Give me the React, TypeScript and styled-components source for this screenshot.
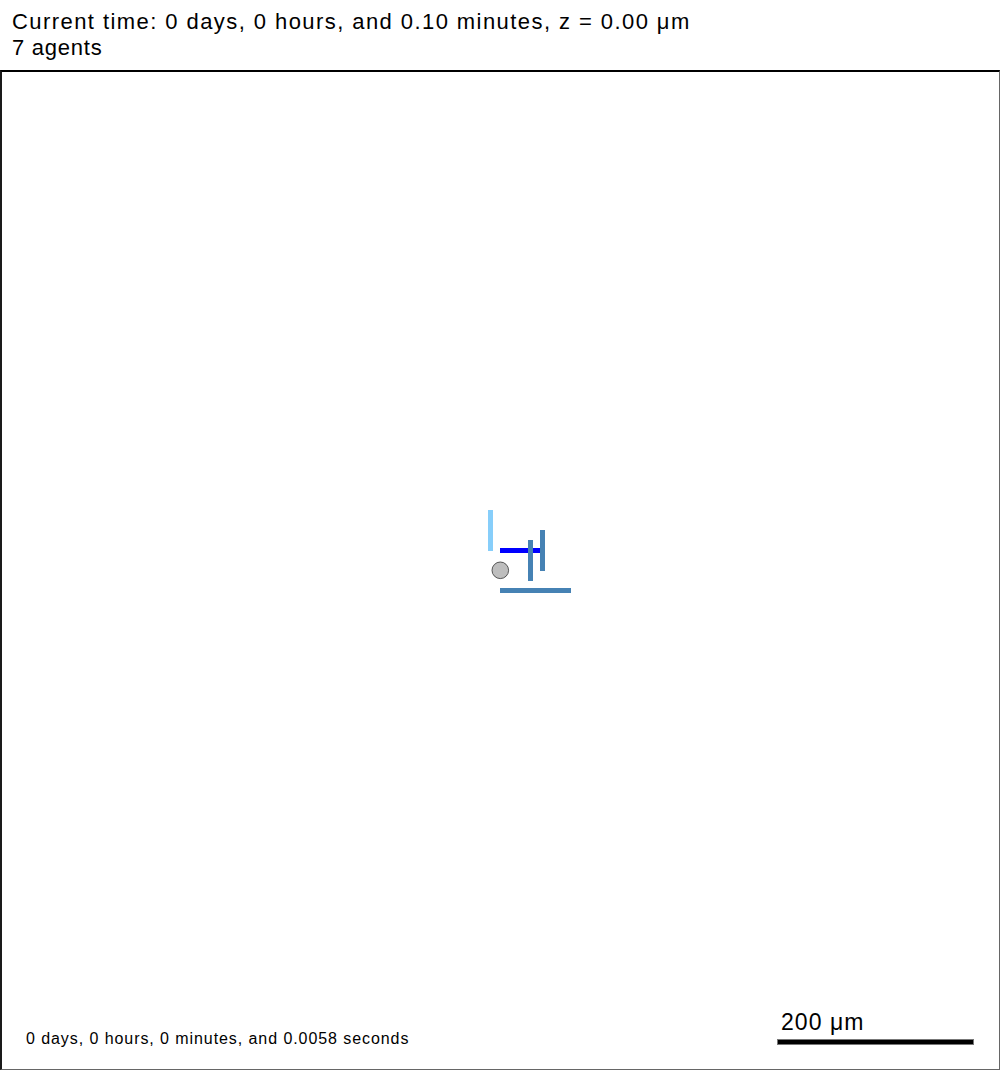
import React from "react";
import styled, { createGlobalStyle } from "styled-components";

const GlobalStyle = createGlobalStyle`
  html, body {
    margin: 0;
    padding: 0;
    background: #fff;
  }
  body {
    font-family: "Liberation Sans", Arial, sans-serif;
    color: #000;
  }
`;

const Page = styled.div`
  width: 1000px;
  height: 1070px;
  display: flex;
  flex-direction: column;
`;

const Header = styled.div`
  height: 70px;
  box-sizing: border-box;
  padding: 9px 0 0 12px;
  font-size: 22px;
  line-height: 26px;
`;

const HeaderLine = styled.div<{ $spacing: number }>`
  letter-spacing: ${(p) => p.$spacing}em;
  white-space: nowrap;
`;

const Frame = styled.div`
  position: relative;
  flex: 1;
  display: flex;
  flex-direction: column;
  justify-content: flex-end;
  border-top: 2px solid #000;
  border-left: 2px solid #1a1a1a;
  border-right: 1px solid #666;
  border-bottom: 1px solid #666;
`;

const Canvas = styled.svg`
  position: absolute;
  left: -2px;
  top: -2px;
  width: 1000px;
  height: 1000px;
  overflow: visible;
`;

const Footer = styled.div`
  position: relative;
  display: flex;
  justify-content: space-between;
  align-items: flex-end;
  padding: 0 25px 20px 24px;
`;

const TimeLabel = styled.div`
  font-size: 16px;
  line-height: 20px;
  letter-spacing: 0.058em;
`;

const ScaleBar = styled.div`
  width: 197px;
  display: flex;
  flex-direction: column;
  margin-bottom: 4px;
`;

const ScaleText = styled.div`
  font-size: 23px;
  line-height: 26px;
  padding-left: 4px;
  margin-bottom: 4px;
  letter-spacing: 0.045em;
`;

const Bar = styled.div`
  height: 4px;
  background: #000;
  border: 1px solid #777;
`;

type Rod = { x: number; y: number; w: number; h: number; color: string };

// agent positions in frame coordinates (page y minus 70)
const rods: Rod[] = [
  { x: 488, y: 440, w: 5, h: 41, color: "#87cefa" },
  { x: 500, y: 478, w: 40, h: 5, color: "#0000ff" },
  { x: 540, y: 460, w: 5, h: 41, color: "#4682b4" },
  { x: 528, y: 470, w: 5, h: 41, color: "#4682b4" },
  { x: 500, y: 518, w: 71, h: 5, color: "#4682b4" },
];

const App = () => {
  return (
    <Page>
      <GlobalStyle />
      <Header>
        <HeaderLine $spacing={0.065}>
          Current time: 0 days, 0 hours, and 0.10 minutes, z = 0.00 μm
        </HeaderLine>
        <HeaderLine $spacing={0.034}>7 agents</HeaderLine>
      </Header>
      <Frame>
        <Canvas viewBox="0 0 1000 1000">
          {rods.map((r, i) => (
            <rect key={i} x={r.x} y={r.y} width={r.w} height={r.h} fill={r.color} />
          ))}
          <circle cx={500.3} cy={500.3} r={8.3} fill="#bebebe" stroke="#333" strokeWidth={0.8} />
        </Canvas>
        <Footer>
          <TimeLabel>0 days, 0 hours, 0 minutes, and 0.0058 seconds</TimeLabel>
          <ScaleBar>
            <ScaleText>200 μm</ScaleText>
            <Bar />
          </ScaleBar>
        </Footer>
      </Frame>
    </Page>
  );
};

export default App;
